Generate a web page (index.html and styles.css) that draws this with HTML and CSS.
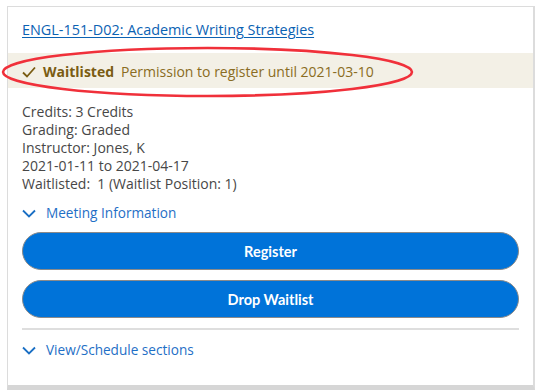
FILE: index.html
```html
<!DOCTYPE html>
<html>
<head>
<meta charset="utf-8">
<link rel="stylesheet" href="styles.css">
</head>
<body>
<div class="card">
  <a class="title" href="#">ENGL-151-D02: Academic Writing Strategies</a>
  <div class="status">
    <svg class="check" width="14" height="12" viewBox="0 0 14 12"><path d="M1 6.5 L5 10.5 L13 1.5" fill="none" stroke="#7a5c12" stroke-width="1.8"/></svg>
    <span class="status-label">Waitlisted</span>
    <span class="status-text">Permission to register until 2021-03-10</span>
  </div>
  <div class="details">
    <div>Credits: 3 Credits</div>
    <div>Grading: Graded</div>
    <div>Instructor: Jones, K</div>
    <div>2021-01-11 to 2021-04-17</div>
    <div>Waitlisted:&nbsp; 1 (Waitlist Position: 1)</div>
  </div>
  <div class="toggle">
    <svg width="14" height="9" viewBox="0 0 14 9"><path d="M1 1.5 L7 7.5 L13 1.5" fill="none" stroke="#1a6fc4" stroke-width="1.8"/></svg>
    <span>Meeting Information</span>
  </div>
  <div class="buttons">
    <button class="btn">Register</button>
    <button class="btn">Drop Waitlist</button>
  </div>
  <div class="sep"></div>
  <div class="toggle toggle-bottom">
    <svg width="14" height="9" viewBox="0 0 14 9"><path d="M1 1.5 L7 7.5 L13 1.5" fill="none" stroke="#1a6fc4" stroke-width="1.8"/></svg>
    <span>View/Schedule sections</span>
  </div>
</div>
<svg class="annot" width="541" height="120" viewBox="0 0 541 120"><ellipse cx="207.5" cy="72" rx="204.5" ry="24" fill="none" stroke="#f0303a" stroke-width="2.6"/></svg>
</body>
</html>
```
FILE: styles.css
```css
html, body {
  margin: 0;
  padding: 0;
  background: #fff;
}
body {
  padding: 6px 0 0 7px;
  width: 541px;
  height: 391px;
  box-sizing: border-box;
  position: relative;
  font-family: "Open Sans", sans-serif;
  font-size: 14px;
  color: #474747;
}
.card {
  width: 528px;
  box-sizing: border-box;
  border: 1px solid #dcdcdc;
  border-right-width: 2px;
  border-bottom: 5px solid #d6d6d6;
  padding-top: 13px;
  padding-bottom: 26px;
  display: flex;
  flex-direction: column;
}
.title {
  margin-left: 14px;
  color: #0b62b3;
  font-size: 14.4px;
  line-height: 19px;
  text-decoration: underline;
  text-underline-offset: 2px;
  align-self: flex-start;
}
.status {
  margin-top: 14px;
  height: 35px;
  background: #f3f0e6;
  display: flex;
  align-items: center;
  padding-left: 14px;
  padding-top: 2px;
  box-sizing: border-box;
}
.check {
  margin-right: 7px;
}
.status-label {
  font-weight: bold;
  color: #7a5c12;
  margin-right: 7px;
}
.status-text {
  color: #8a6c22;
}
.details {
  margin: 15px 0 0 14px;
  line-height: 18px;
}
.toggle {
  margin: 10px 0 0 14px;
  display: flex;
  align-items: center;
  gap: 10px;
  color: #1f6fc6;
  font-size: 13.6px;
  line-height: 19px;
}
.toggle svg {
  margin-top: 1px;
}
.buttons {
  margin: 10px 14px 0 14px;
  display: flex;
  flex-direction: column;
  gap: 10px;
}
.btn {
  height: 38px;
  border-radius: 19px;
  border: 1px solid #8a8a8a;
  background: #0073d9;
  color: #fff;
  font-family: "Lato", sans-serif;
  font-weight: bold;
  font-size: 14.5px;
  padding: 0;
}
.sep {
  margin: 10px 14px 0 14px;
  height: 2px;
  background: #dedede;
}
.toggle-bottom {
  margin-top: 10px;
}
.annot {
  position: absolute;
  left: 0;
  top: 0;
}
```
